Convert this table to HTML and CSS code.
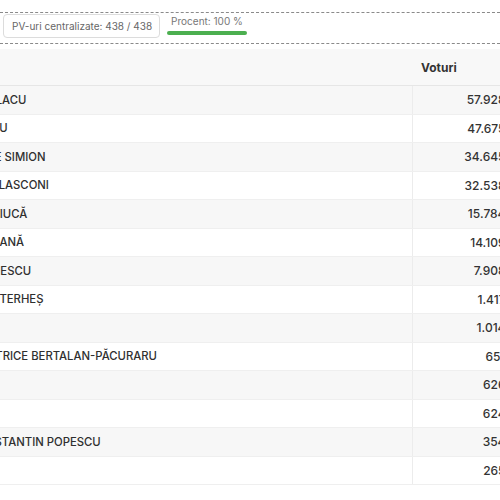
FILE: index.html
```html
<!DOCTYPE html>
<html lang="ro">
<head>
<meta charset="utf-8">
<link rel="stylesheet" href="styles.css">
</head>
<body>
<div class="page">
  <div class="stats">
    <div class="pv-box">PV-uri centralizate: 438 / 438</div>
    <div class="pct">
      <span class="pct-label">Procent: 100 %</span>
      <div class="bar"></div>
    </div>
  </div>
  <div class="scroller">
    <div class="table">
      <div class="row head"><div class="name"></div><div class="votes">Voturi</div></div>
      <div class="row"><div class="name">ION-MARCEL CIOLACU</div><div class="votes">57.928</div></div>
      <div class="row"><div class="name">CĂLIN GEORGESCU</div><div class="votes">47.675</div></div>
      <div class="row"><div class="name">GEORGE-NICOLAE SIMION</div><div class="votes">34.645</div></div>
      <div class="row"><div class="name">ELENA-VALERICA LASCONI</div><div class="votes">32.538</div></div>
      <div class="row"><div class="name">NICOLAE-IONEL CIUCĂ</div><div class="votes">15.784</div></div>
      <div class="row"><div class="name">MIRCEA-DAN GEOANĂ</div><div class="votes">14.109</div></div>
      <div class="row"><div class="name">CRISTIAN DIACONESCU</div><div class="votes">7.908</div></div>
      <div class="row"><div class="name">CRISTIAN-VASILE TERHEȘ</div><div class="votes">1.417</div></div>
      <div class="row"><div class="name">KELEMEN HUNOR</div><div class="votes">1.014</div></div>
      <div class="row"><div class="name">ALEXANDRA-BEATRICE BERTALAN-PĂCURARU</div><div class="votes">651</div></div>
      <div class="row"><div class="name">LUDOVIC ORBAN</div><div class="votes">626</div></div>
      <div class="row"><div class="name">ANA BIRCHALL</div><div class="votes">624</div></div>
      <div class="row"><div class="name">SEBASTIAN-CONSTANTIN POPESCU</div><div class="votes">354</div></div>
      <div class="row"><div class="name">SILVIU PREDOIU</div><div class="votes">265</div></div>
    </div>
  </div>
</div>
</body>
</html>
```
FILE: styles.css
```css
html, body {
  margin: 0;
  padding: 0;
  background: #ffffff;
  overflow: hidden;
}
body {
  width: 500px;
  height: 500px;
  font-family: Inter, "Liberation Sans", sans-serif;
  color: #333333;
}
.page {
  padding-top: 12px;
  width: 500px;
}
.stats {
  border-top: 1px dashed #8a8a8a;
  border-bottom: 1px dashed #8a8a8a;
  padding: 1px 0 5px 3px;
  display: flex;
  align-items: flex-start;
  gap: 7px;
}
.pv-box {
  border: 1px solid #dcdcdc;
  border-radius: 4px;
  padding: 0 7px 0 8px;
  height: 22px;
  line-height: 22px;
  font-size: 10px;
  color: #666666;
  white-space: nowrap;
}
.pct {
  display: flex;
  flex-direction: column;
  width: 80px;
}
.pct-label {
  font-size: 10px;
  line-height: 14px;
  color: #777777;
  padding-left: 4px;
  white-space: nowrap;
}
.bar {
  margin-top: 3px;
  height: 4px;
  border-radius: 2px;
  background: #4caf50;
}
/* the table is wider than the window and scrolled sideways */
.scroller {
  margin-top: 5px;
  overflow: hidden;
}
.table {
  margin-left: -100px;
  width: 614px;
  font-size: 12px;
}
.row {
  display: grid;
  grid-template-columns: 512px 1fr;
  height: 28.5px;
  box-sizing: border-box;
  border-bottom: 1px solid #efefef;
  background: #ffffff;
}
.row:nth-child(even) {
  background: #f7f7f7;
}
.row.head {
  height: 37px;
  background: #f8f8f8;
  border-bottom: 1px solid #e6e6e6;
  font-weight: 700;
  color: #222222;
}
.name {
  display: flex;
  align-items: center;
  overflow: hidden;
  font-size: 11.3px;
  font-weight: 500;
  color: #2f2f2f;
  white-space: nowrap;
}
.votes {
  display: flex;
  align-items: center;
  justify-content: flex-end;
  padding-right: 8.5px;
  border-left: 1px solid #ececec;
  color: #333333;
  font-weight: 500;
  white-space: nowrap;
}
.head .votes {
  justify-content: flex-start;
  padding-left: 9px;
  border-left: none;
  font-weight: 700;
}
```
